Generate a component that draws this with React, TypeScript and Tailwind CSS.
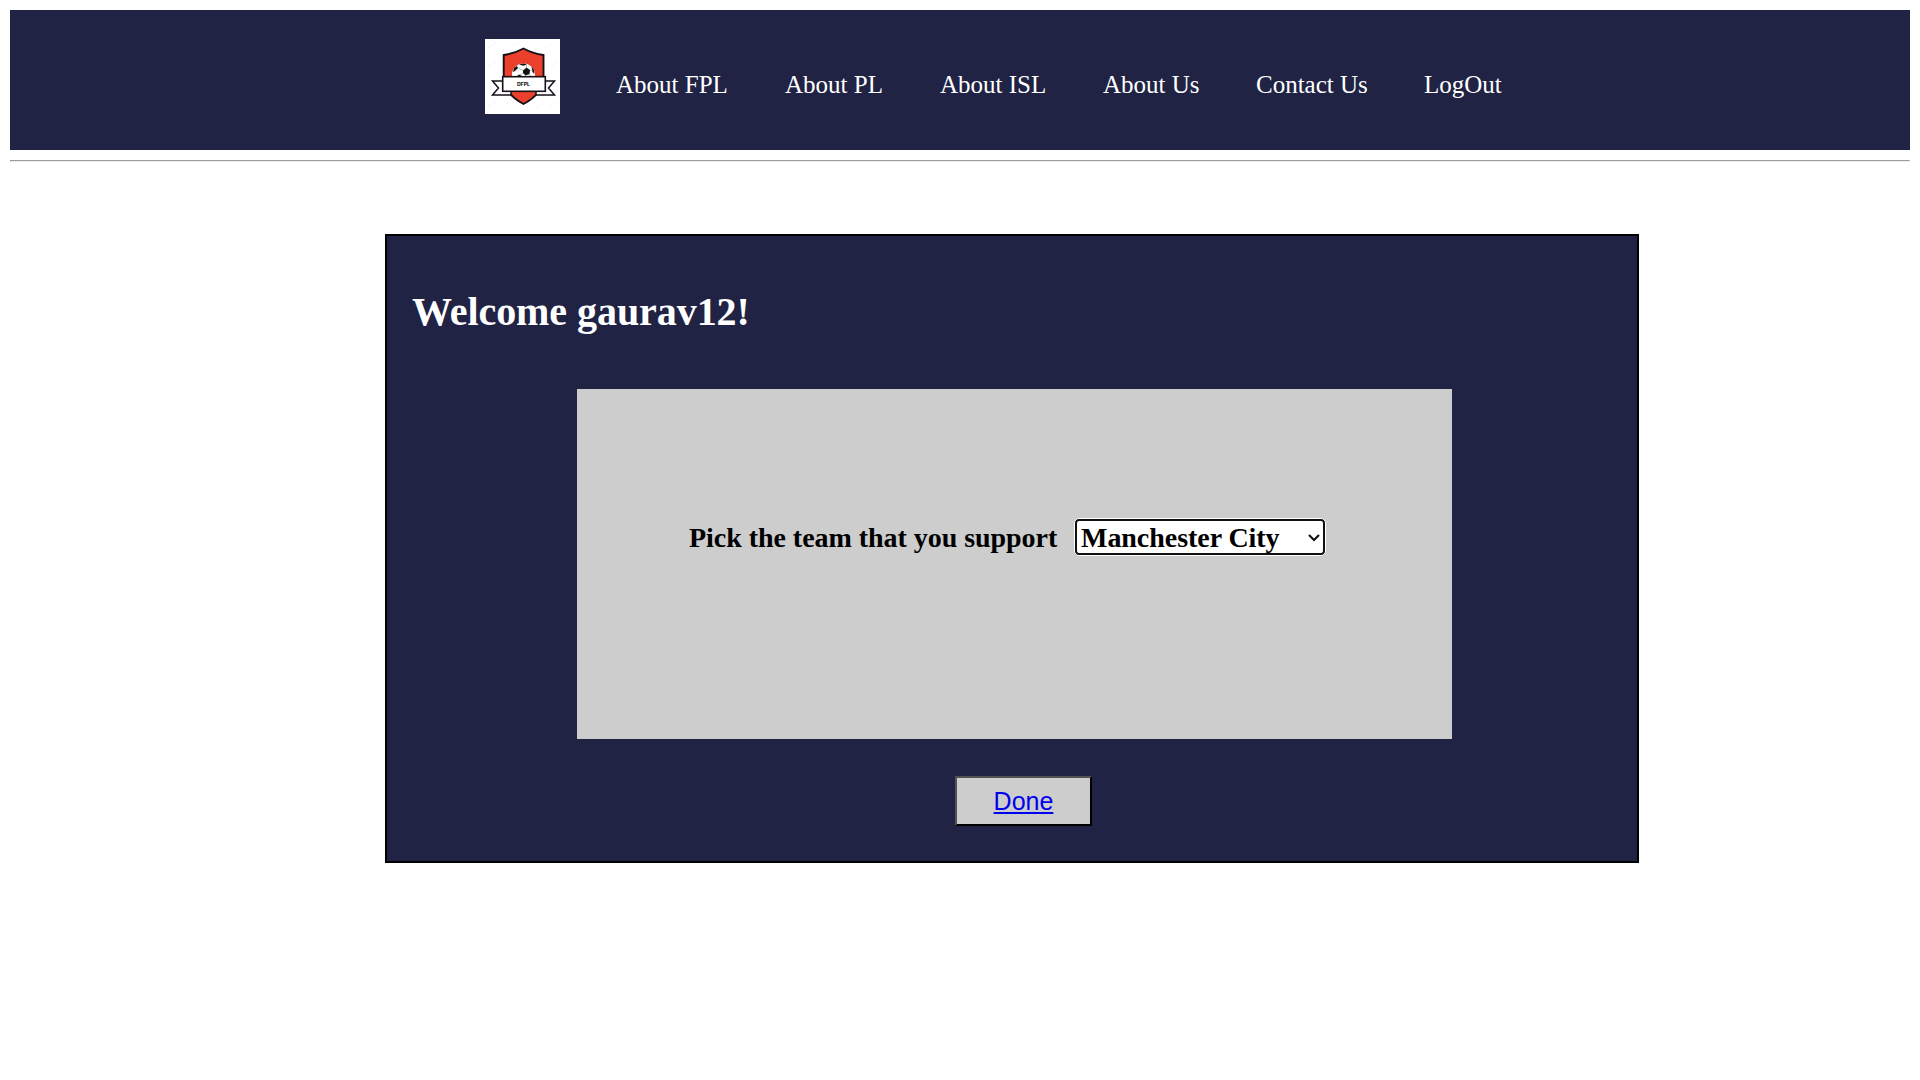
const links = [
  { label: 'About FPL', width: 'w-[113px]' },
  { label: 'About PL', width: 'w-[99px]' },
  { label: 'About ISL', width: 'w-[107px]' },
  { label: 'About Us', width: 'w-[97px]' },
  { label: 'Contact Us', width: 'w-[112px]' },
  { label: 'LogOut', width: 'w-[79px]' },
];

function Logo() {
  return (
    <svg viewBox="0 0 75 75" className="mt-[29px] size-[75px] shrink-0 bg-white">
      <g stroke="#eeeeee" strokeWidth="0.6">
        <path d="M3 9l8-6M25 9l8-6M60 9l8-6M3 28l8-6M64 29l8-6M3 68l8-6M20 66l8-6M50 70l8-6M64 68l8-6" />
      </g>
      <path d="M18.700 16C26 15 33 12.500 38.500 9.500C44 12.500 51 15 58.500 16V38C58 50 50 59 38.500 65C27 59 18.700 50 18.700 38Z" fill="#eb402b" stroke="#161018" strokeWidth="1.9" />
      <path d="M18 42H7.500L13.500 49L7.500 56H26V52M60 42H69.500L63.500 49L69.500 56H51V52" fill="white" stroke="#161018" strokeWidth="1.5" />
      <circle cx="38.500" cy="36" r="11.500" fill="white" />
      <g fill="#111">
        <path d="M38 31.500L41.500 28.500L45 31L44.500 35L40.500 36.500L38 34Z" />
        <path d="M34 25.200L39 24.500L42 25.800L38 26.800Z" />
        <path d="M29 29L32 27L33 29L30 32L28 33Z" />
        <path d="M31 38L34 35.500L37 37V39H30Z" />
        <path d="M46.500 27L49 31L49.500 35L47.500 33Z" />
      </g>
      <path d="M38 34L35 36M33 29L38 31.500M45 31L48 31M41.500 28.500V26M44 35L46 38" stroke="#777" strokeWidth="0.5" />
      <rect x="17.700" y="37.700" width="42.600" height="14.600" fill="white" stroke="#161018" strokeWidth="1.6" />
      <text x="38.500" y="47" textAnchor="middle" textLength="13" className="fill-black font-['Liberation_Sans'] text-[5px] font-bold">DFPL</text>
    </svg>
  );
}

export default function App() {
  return (
    <div className="flex min-h-screen flex-col bg-white px-2.5 pt-2.5 font-['Liberation_Serif',serif] antialiased">
      <header className="flex h-[140px] shrink-0 gap-[56px] bg-[#202344] pl-[475px]">
        <Logo />
        <nav className="flex gap-[56px] pt-[60px] text-[25px] leading-[29px] whitespace-nowrap text-white">
          {links.map((link) => (
            <a key={link.label} href="#" className={link.width}>{link.label}</a>
          ))}
        </nav>
      </header>
      <hr className="mt-2.5 h-[2px] shrink-0 border border-t-[#9a9a9a] border-r-[#eeeeee] border-b-[#eeeeee] border-l-[#9a9a9a]" />
      <main className="mt-[72px] ml-[375px] flex h-[629px] w-[1254px] shrink-0 flex-col border-2 border-black bg-[#202344]">
        <h1 className="mt-[53px] ml-[25px] h-[46px] text-[40px] leading-[46px] font-bold tracking-[-0.06px] text-white">Welcome gaurav12!</h1>
        <section className="mt-[54px] ml-[190px] flex h-[350px] w-[875px] items-start bg-[#cdcdcd] pt-[129px] pl-[112px] text-[28px] font-bold text-black">
          <label className="w-[385px] pt-[4px] leading-[32px] tracking-[-0.04px] whitespace-nowrap">Pick the team that you support</label>
          <button className="flex h-[38px] w-[252px] items-center justify-between rounded-[5px] border border-white bg-[#101010] p-[2px] text-left">
            <span className="flex h-full w-full items-center justify-between rounded-[2px] bg-white pr-[3px] pl-[4px] leading-[32px]">
              <span className="pt-[2px] tracking-[-0.05px]">Manchester City</span>
              <svg viewBox="0 0 12 8" className="mt-[2px] h-2 w-3" fill="none" stroke="#101010" strokeWidth="2">
                <path d="M1 1L6 6L11 1" />
              </svg>
            </span>
          </button>
        </section>
        <button className="mt-[37px] ml-[568px] h-[50px] w-[137px] border-2 border-t-[#555052] border-r-black border-b-black border-l-[#555052] bg-[#cdcdcd] font-['Liberation_Sans',sans-serif] text-[25px] leading-[29px]">
          <a href="#" className="text-[#0000ee] underline">Done</a>
        </button>
      </main>
    </div>
  );
}
